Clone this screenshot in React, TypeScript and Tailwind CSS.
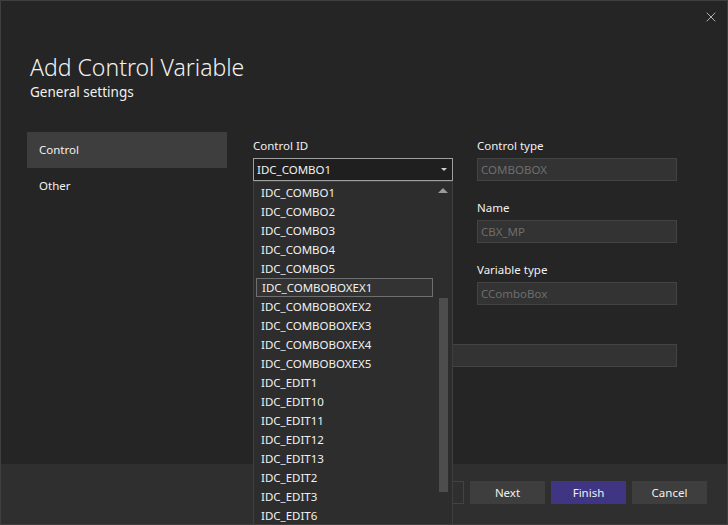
import { X } from 'lucide-react';

const items = [
  'IDC_COMBO1',
  'IDC_COMBO2',
  'IDC_COMBO3',
  'IDC_COMBO4',
  'IDC_COMBO5',
  'IDC_COMBOBOXEX1',
  'IDC_COMBOBOXEX2',
  'IDC_COMBOBOXEX3',
  'IDC_COMBOBOXEX4',
  'IDC_COMBOBOXEX5',
  'IDC_EDIT1',
  'IDC_EDIT10',
  'IDC_EDIT11',
  'IDC_EDIT12',
  'IDC_EDIT13',
  'IDC_EDIT2',
  'IDC_EDIT3',
  'IDC_EDIT6',
];

function Field({ label, value }: { label: string; value: string }) {
  return (
    <div className="flex w-[200px] flex-col">
      <div className="h-[20px] text-[11.5px] leading-[16px] text-[#f1f1f1]">{label}</div>
      <div className="flex h-[23px] items-center border border-[#434343] bg-[#333333] px-[3px] text-[11.5px] text-[#6e6e6e]">
        {value}
      </div>
    </div>
  );
}

export default function App() {
  return (
    <div
      className="relative flex h-[525px] w-[728px] flex-col overflow-hidden border border-[#3f3f3f] bg-[#252526] text-[#f1f1f1]"
      style={{ fontFamily: '"Noto Sans", "Open Sans", sans-serif' }}
    >
      <div className="flex justify-end pt-[8px] pr-[8px]">
        <X className="h-[16px] w-[16px] text-[#cfcfcf]" strokeWidth={1.25} />
      </div>

      <div className="pl-[29px] pt-[27px]">
        <h1 className="text-[23px] font-light leading-[30px] text-[#f1f1f1]">Add Control Variable</h1>
        <p className="text-[13.5px] leading-[20px] text-[#f1f1f1]">General settings</p>
      </div>

      <div className="flex flex-1 pt-[30px]">
        <nav className="ml-[26px] flex w-[200px] flex-col">
          <div className="flex h-[36px] items-center bg-[#3e3e3e] pl-[12px] text-[11.5px]">Control</div>
          <div className="flex h-[36px] items-center pl-[12px] text-[11.5px]">Other</div>
        </nav>

        <div className="ml-[26px] flex flex-col pt-[6px]">
          <div className="flex gap-[24px]">
            <div className="flex w-[200px] flex-col">
              <div className="h-[20px] text-[11.5px] leading-[16px]">Control ID</div>
              <div className="flex h-[23px] items-center justify-between border border-[#a0a0a0] bg-[#1f1f1f] pl-[3px] pr-[5px] text-[11.5px]">
                <span>IDC_COMBO1</span>
                <span className="h-0 w-0 border-x-[3px] border-t-[3px] border-x-transparent border-t-[#cfcfcf]" />
              </div>
            </div>
            <Field label="Control type" value="COMBOBOX" />
          </div>
          <div className="mt-[19px] flex gap-[24px]">
            <div className="w-[200px]" />
            <Field label="Name" value="CBX_MP" />
          </div>
          <div className="mt-[19px] flex gap-[24px]">
            <div className="w-[200px]" />
            <Field label="Variable type" value="CComboBox" />
          </div>
          <div className="mt-[19px] flex w-[424px] flex-col">
            <div className="h-[20px]" />
            <div className="h-[23px] border border-[#434343] bg-[#333333]" />
          </div>
        </div>
      </div>

      <div className="flex h-[60px] items-start justify-end gap-[6px] bg-[#2f2f2f] pr-[20px] pt-[17px]">
        <button className="h-[23px] w-[75px] border border-[#434343] text-[11.5px] text-[#6e6e6e]">Previous</button>
        <button className="h-[23px] w-[75px] bg-[#3e3e3e] text-[11.5px]">Next</button>
        <button className="h-[23px] w-[75px] bg-[#3f3583] text-[11.5px]">Finish</button>
        <button className="h-[23px] w-[75px] bg-[#3e3e3e] text-[11.5px]">Cancel</button>
      </div>

      <div className="absolute bottom-0 left-[252px] top-[180px] w-[200px] overflow-hidden border-x border-t border-[#3f3f3f] bg-[#2d2d2d]">
        <div className="flex flex-col pl-[2px] pt-[1px]">
          {items.map((it) => (
            <div
              key={it}
              className={
                'flex h-[19px] w-[177px] items-center pl-[5px] text-[11.5px] ' +
                (it === 'IDC_COMBOBOXEX1' ? 'border border-[#6f6f6f] bg-[#333333] pl-[4px]' : '')
              }
            >
              {it}
            </div>
          ))}
        </div>
        <div className="absolute right-[4px] top-[6px] h-0 w-0 border-x-[5px] border-b-[5px] border-x-transparent border-b-[#9a9a9a]" />
        <div className="absolute right-[4px] top-[116px] h-[194px] w-[9px] bg-[#4d4d4d]" />
      </div>
    </div>
  );
}
